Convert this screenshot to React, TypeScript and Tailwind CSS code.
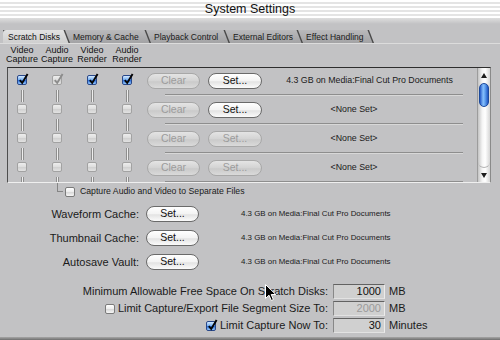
import React from "react";

type CbState = "on" | "off" | "dimOn" | "dimOff";

function Check({ state }: { state: CbState }) {
  let box = "border-[#a2a2a2] bg-[linear-gradient(180deg,#ededed_0%,#dddddd_50%,#d1d1d1_55%,#e2e2e2_100%)]";
  if (state === "on")
    box = "border-[#29488a] bg-[linear-gradient(180deg,#d6ebff_0%,#79b1f3_45%,#2f6fd8_55%,#93c8ff_100%)]";
  if (state === "off")
    box = "border-[#7b7b7b] bg-[linear-gradient(180deg,#ffffff_0%,#ececec_50%,#d9d9d9_55%,#f6f6f6_100%)]";
  return (
    <div className={`relative w-[10px] h-[10px] shrink-0 rounded-[2px] border ${box}`}>
      {(state === "on" || state === "dimOn") && (
        <svg className="absolute left-[0px] top-[-3px]" width="11" height="12" viewBox="0 0 11 12">
          <path
            d="M1.8 7.2 L4.2 10 L9.6 1"
            fill="none"
            stroke={state === "on" ? "#050505" : "#8c8c8c"}
            strokeWidth="1.9"
          />
        </svg>
      )}
    </div>
  );
}

function Pill({ label, dim, w }: { label: string; dim?: boolean; w: string }) {
  return (
    <div
      className={`h-[16px] ${w} shrink-0 rounded-full border flex items-center justify-center text-[10.5px] ${
        dim
          ? "border-[#a8a8a8] text-[#9c9c9c] bg-[linear-gradient(180deg,#e4e4e4_0%,#d3d3d3_50%,#cacaca_55%,#dadada_100%)]"
          : "border-[#6a6a6a] text-[#111] bg-[linear-gradient(180deg,#ffffff_0%,#f3f3f3_50%,#e3e3e3_55%,#fbfbfb_100%)]"
      }`}
    >
      {label}
    </div>
  );
}

function Link() {
  return <div className="mt-[5px] mb-[2px] h-[12px] w-[3px] border-x border-[#8e8e8e] bg-[#eeeeee]" />;
}

function CheckColumn({ states }: { states: CbState[] }) {
  return (
    <div className="w-[28px] flex flex-col items-center pt-[7px]">
      {states.map((s, i) => (
        <React.Fragment key={i}>
          <Check state={s} />
          {i < states.length - 1 ? (
            <Link />
          ) : (
            <div className="mt-[5px] flex-1 w-[3px] border-x border-[#8e8e8e] bg-[#eeeeee]" />
          )}
        </React.Fragment>
      ))}
    </div>
  );
}

const disks = [
  { info: "4.3 GB on Media:Final Cut Pro Documents", set: true },
  { info: "<None Set>", set: true },
  { info: "<None Set>", set: false },
  { info: "<None Set>", set: false },
];

const tabs = [
  { label: "Scratch Disks", w: "w-[67px]", z: "z-[9]", active: true },
  { label: "Memory & Cache", w: "w-[86px]", z: "z-[4]" },
  { label: "Playback Control", w: "w-[84px]", z: "z-[3]" },
  { label: "External Editors", w: "w-[78px]", z: "z-[2]" },
  { label: "Effect Handling", w: "w-[76px]", z: "z-[1]" },
];

function Field({ value, dim }: { value: string; dim?: boolean }) {
  return (
    <div
      className={`ml-[5px] w-[52px] h-[15px] shrink-0 flex items-center justify-end pr-[3px] text-[11px] bg-[#d0d0d0] border border-t-[#626262] border-l-[#888888] border-r-[#ececec] border-b-[#e2e2e2] ${
        dim ? "text-[#9a9a9a]" : "text-[#111]"
      }`}
    >
      {value}
    </div>
  );
}

export default function App() {
  return (
    <div className="w-[500px] h-[340px] overflow-hidden relative flex flex-col bg-[#c2c2c4] text-[#1a1a1a] [font-family:'Liberation_Sans',Arial,sans-serif]">
      {/* title bar */}
      <div className="h-[18px] shrink-0 flex items-center justify-center bg-[repeating-linear-gradient(180deg,#ffffff_0px,#ffffff_2px,#e4e4e4_2px,#e4e4e4_4px)] text-[12.5px] text-[#111]">
        System Settings
      </div>
      <div className="h-[6px] shrink-0 bg-[linear-gradient(180deg,#dedede,#c2c2c4)]" />

      {/* tabs */}
      <div className="mt-[6px] h-[13px] shrink-0 flex pl-[3px]">
        {tabs.map((t, i) => (
          <div
            key={t.label}
            className={`relative ${t.z} ${t.w} ${i > 0 ? "-ml-[5px]" : ""} h-[13px] bg-[#4a4a4a] [clip-path:polygon(0_0,calc(100%_-_5px)_0,100%_100%,0_100%)]`}
          >
            <div
              className={`h-[13px] pt-[1px] ${i > 0 ? "pl-[8px]" : "pl-[5px] rounded-tl-[3px]"} text-[8.5px] leading-[12px] whitespace-nowrap [clip-path:polygon(0_0,calc(100%_-_6.5px)_0,calc(100%_-_1.5px)_100%,0_100%)] ${
                t.active
                  ? "bg-[linear-gradient(180deg,#e2e2e2,#cfcfcf)] text-[#111]"
                  : "bg-[linear-gradient(180deg,#b9b9bb,#a3a3a5)] text-[#1a1a1a]"
              }`}
            >
              {t.label}
            </div>
          </div>
        ))}
      </div>
      <div className="h-[1px] shrink-0 bg-[#dcdcdc]" />

      {/* column headers */}
      <div className="mt-[2px] ml-[8px] flex gap-[7px] text-[9px] leading-[8.5px] text-[#111]">
        {[
          ["Video", "Capture"],
          ["Audio", "Capture"],
          ["Video", "Render"],
          ["Audio", "Render"],
        ].map(([a, b], i) => (
          <div key={i} className="w-[28px] flex flex-col items-center whitespace-nowrap">
            <span>{a}</span>
            <span>{b}</span>
          </div>
        ))}
      </div>

      {/* scratch disk list */}
      <div className="mt-[4px] ml-[7px] w-[484px] h-[116px] shrink-0 flex border border-t-[#2e2e2e] border-l-[#4e4e4e] border-r-[#8a8a8a] border-b-[#efefef] overflow-hidden">
        <div className="flex gap-[7px]">
          <CheckColumn states={["on", "dimOff", "dimOff", "dimOff"]} />
          <CheckColumn states={["dimOn", "dimOff", "dimOff", "dimOff"]} />
          <CheckColumn states={["on", "dimOff", "dimOff", "dimOff"]} />
          <CheckColumn states={["on", "dimOff", "dimOff", "dimOff"]} />
        </div>
        <div className="flex-1 flex flex-col">
          {disks.map((d, i) => (
            <div key={i} className="h-[29px] shrink-0 flex flex-col">
              <div className="mt-[5px] h-[16px] flex items-center">
                <Pill label="Clear" dim w="ml-[6px] w-[53px]" />
                <Pill label="Set..." dim={!d.set} w="ml-[8px] w-[54px]" />
                <div className={`flex-1 text-center text-[8.8px] whitespace-nowrap ${i > 0 ? "pr-[31px]" : ""}`}>
                  {d.info}
                </div>
              </div>
              <div className="mt-[5px] ml-[24px] w-[298px] h-[1px] bg-[#8e8e8e]" />
              <div className="ml-[24px] w-[298px] h-[1px] bg-[#d8d8d8]" />
            </div>
          ))}
        </div>
        {/* scroll bar */}
        <div className="w-[13px] shrink-0 flex flex-col border-l border-[#9c9c9c] bg-[linear-gradient(90deg,#c4c4c4,#f4f4f4_35%,#ffffff_60%,#d6d6d6)]">
          <div className="h-[13px] shrink-0 flex items-center justify-center pt-[1px]">
            <svg width="6" height="5" viewBox="0 0 6 5">
              <path d="M3 0 L6 5 L0 5 Z" fill="#1e1e1e" />
            </svg>
          </div>
          <div className="flex-1 flex flex-col rounded-b-full border-b border-[#b4b4b4]">
            <div className="mt-[2px] mx-auto w-[10px] h-[24px] rounded-full border border-[#1d4a9c] bg-[linear-gradient(90deg,#2558c6,#86bffc_40%,#66a6f2_60%,#1f55c2)]" />
          </div>
          <div className="h-[14px] shrink-0 flex items-center justify-center">
            <svg width="6" height="5" viewBox="0 0 6 5">
              <path d="M0 0 L6 0 L3 5 Z" fill="#1e1e1e" />
            </svg>
          </div>
        </div>
      </div>

      {/* separate files */}
      <div className="mt-[2px] h-[14px] shrink-0 flex items-center">
        <div className="ml-[57px] -mt-[2px] self-start w-[6px] h-[9px] border-l border-b border-[#858585]" />
        <div className="ml-[2px]">
          <Check state="off" />
        </div>
        <span className="ml-[5px] text-[8.7px] whitespace-nowrap">Capture Audio and Video to Separate Files</span>
      </div>

      {/* cache locations */}
      <div className="mt-[3px] flex flex-col">
        {["Waveform Cache:", "Thumbnail Cache:", "Autosave Vault:"].map((l) => (
          <div key={l} className="h-[24px] flex items-center">
            <div className="w-[139px] text-right text-[11px] whitespace-nowrap">{l}</div>
            <div className="ml-[7px]">
              <Pill label="Set..." w="w-[53px]" />
            </div>
            <div className="ml-[42px] text-[7.9px] whitespace-nowrap">4.3 GB on Media:Final Cut Pro Documents</div>
          </div>
        ))}
      </div>

      {/* limits */}
      <div className="mt-[9px] flex flex-col text-[11px]">
        <div className="h-[17px] flex items-center">
          <div className="w-[328px] flex justify-end whitespace-nowrap">Minimum Allowable Free Space On Scratch Disks:</div>
          <Field value="1000" />
          <span className="ml-[4px]">MB</span>
        </div>
        <div className="h-[17px] flex items-center">
          <div className="w-[328px] flex justify-end items-center gap-[3px] whitespace-nowrap">
            <Check state="off" />
            <span>Limit Capture/Export File Segment Size To:</span>
          </div>
          <Field value="2000" dim />
          <span className="ml-[4px]">MB</span>
        </div>
        <div className="h-[17px] flex items-center">
          <div className="w-[328px] flex justify-end items-center gap-[4px] whitespace-nowrap">
            <Check state="on" />
            <span>Limit Capture Now To:</span>
          </div>
          <Field value="30" />
          <span className="ml-[4px]">Minutes</span>
        </div>
      </div>

      <div className="mt-auto h-[3px] shrink-0 bg-[linear-gradient(180deg,#a6a6a6,#6e6e6e)]" />

      {/* mouse pointer */}
      <svg className="absolute left-[265px] top-[284px]" width="12" height="18" viewBox="0 0 12 18">
        <path d="M0.5 0.5 L0.5 14.5 L4 11.2 L6.3 16.5 L8.4 15.6 L6.2 10.5 L10.8 10.5 Z" fill="#000" stroke="#fff" strokeWidth="1" />
      </svg>
    </div>
  );
}
